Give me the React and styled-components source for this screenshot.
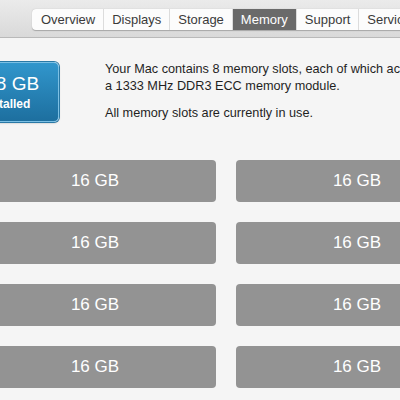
import React from "react";
import styled, { createGlobalStyle } from "styled-components";

const GlobalStyle = createGlobalStyle`
  html, body {
    margin: 0;
    padding: 0;
    background: #f5f5f5;
  }
  body {
    font-family: "Liberation Sans", Arial, sans-serif;
    -webkit-font-smoothing: antialiased;
  }
`;

const Window = styled.div`
  width: 400px;
  height: 400px;
  overflow: hidden;
  background: #f5f5f5;
`;

const Toolbar = styled.div`
  height: 38px;
  box-sizing: border-box;
  padding: 9px 0 0 32px;
  background: linear-gradient(#ebebeb, #d9d9d9);
  border-bottom: 1px solid #b9b9b9;
  display: flex;
  white-space: nowrap;
`;

const TabGroup = styled.div`
  display: flex;
  height: 21px;
  border-radius: 4px 0 0 4px;
  box-shadow: 0 0.5px 1px rgba(0, 0, 0, 0.25);
  background: #fcfcfc;
`;

const Tab = styled.div`
  height: 21px;
  line-height: 21px;
  padding: 0 8px;
  font-size: 13px;
  color: ${(p) => (p.$active ? "#ffffff" : "#3a3a3a")};
  background: ${(p) => (p.$active ? "#6a6a6a" : "transparent")};
  border-left: 1px solid ${(p) => (p.$first ? "transparent" : "#dcdcdc")};
  flex-shrink: 0;
`;

const Body = styled.div`
  padding-top: 23px;
`;

const Summary = styled.div`
  display: flex;
  align-items: flex-start;
`;

const InstalledBadge = styled.div`
  width: 98px;
  height: 60px;
  margin-left: -39px;
  margin-top: 1px;
  box-sizing: border-box;
  border-radius: 5px;
  border: 1px solid #7cc0e4;
  box-shadow: 0 0 0 1px #2a79a6, 0 1px 2px rgba(0, 0, 0, 0.3);
  background: linear-gradient(#3196cc, #1d6f9f);
  color: #ffffff;
  display: flex;
  flex-direction: column;
  align-items: center;
  justify-content: center;
  flex-shrink: 0;
`;

const BadgeSize = styled.div`
  font-size: 19px;
  line-height: 24px;
  margin-left: 15px;
`;

const BadgeLabel = styled.div`
  font-size: 12px;
  font-weight: bold;
  line-height: 17px;
  margin-right: 8px;
`;

const Description = styled.div`
  margin-left: 46px;
  font-size: 12.7px;
  line-height: 17px;
  color: #1f1f1f;
  white-space: nowrap;

  & p {
    margin: 0 0 10px;
  }
`;

const SlotGrid = styled.div`
  display: grid;
  grid-template-columns: 242px 242px;
  grid-auto-rows: 42px;
  gap: 20px;
  margin: 28px 0 0 -26px;
`;

const Slot = styled.div`
  border-radius: 4px;
  background: #939393;
  color: #ffffff;
  font-size: 17px;
  display: flex;
  align-items: center;
  justify-content: center;
`;

const tabs = ["Overview", "Displays", "Storage", "Memory", "Support", "Service"];
const slots = Array.from({ length: 8 }, () => "16 GB");

export default function App() {
  return (
    <Window>
      <GlobalStyle />
      <Toolbar>
        <TabGroup>
          {tabs.map((t, i) => (
            <Tab key={t} $first={i === 0} $active={t === "Memory"}>
              {t}
            </Tab>
          ))}
        </TabGroup>
      </Toolbar>
      <Body>
        <Summary>
          <InstalledBadge>
            <BadgeSize>8 GB</BadgeSize>
            <BadgeLabel>Installed</BadgeLabel>
          </InstalledBadge>
          <Description>
            <p>
              Your Mac contains 8 memory slots, each of which accepts
              <br />a 1333 MHz DDR3 ECC memory module.
            </p>
            <p>All memory slots are currently in use.</p>
          </Description>
        </Summary>
        <SlotGrid>
          {slots.map((s, i) => (
            <Slot key={i}>{s}</Slot>
          ))}
        </SlotGrid>
      </Body>
    </Window>
  );
}
